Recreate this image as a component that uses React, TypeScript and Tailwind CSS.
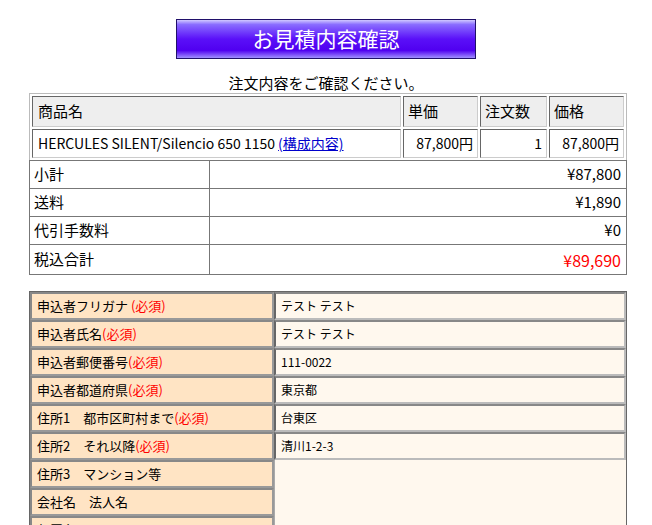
export default function App() {
  const f = { fontFamily: '"Noto Sans CJK JP", "Liberation Sans", sans-serif' };
  const req = <span className="text-[#ff0000]">(必須)</span>;
  const rows: [React.ReactNode, string][] = [
    [<>申込者フリガナ {req}</>, "テスト テスト"],
    [<>申込者氏名{req}</>, "テスト テスト"],
    [<>申込者郵便番号{req}</>, "111-0022"],
    [<>申込者都道府県{req}</>, "東京都"],
    [<>住所1　都市区町村まで{req}</>, "台東区"],
    [<>住所2　それ以降{req}</>, "清川1-2-3"],
  ];
  const cell = "border border-t-[#666] border-l-[#666] border-b-[#ccc] border-r-[#ccc]";
  const fcellL = "h-[28px] bg-[#ffe4c4] border-2 border-t-[#888] border-l-[#888] border-b-[#999] border-r-[#999] px-[5px] text-[13px]";
  const fcellR = "h-[28px] bg-[#fff8ee] border-2 border-t-[#888] border-l-[#666] border-b-[#bbb] border-r-[#bbb] px-[5px] text-[12px]";
  return (
    <div style={f} className="w-[652px] h-[525px] overflow-hidden bg-white text-black">
      <div className="flex justify-center pt-[19px]">
        <div className="w-[300px] h-[40px] border border-[#20106a] flex items-center justify-center text-white text-[21px] bg-[linear-gradient(to_bottom,#d0c8ff_0%,#8a6cff_12%,#5a10f8_50%,#5000f0_80%,#a090ff_100%)]">
          お見積内容確認
        </div>
      </div>
      <div className="text-center text-[15px] mt-[14px] leading-[20px]">注文内容をご確認ください。</div>
      <div className="mx-[29px] w-[598px]">
        <table className="w-full border border-[#bbb] border-separate border-spacing-[2px] text-[15px]">
          <tbody>
            <tr className="h-[31px] bg-[#eee]">
              <td className={`${cell} px-[5px]`}>商品名</td>
              <td className={`${cell} px-[4px] w-[75px]`}>単価</td>
              <td className={`${cell} px-[4px] w-[67px]`}>注文数</td>
              <td className={`${cell} px-[4px] w-[75px]`}>価格</td>
            </tr>
            <tr className="h-[29px] text-[14px]">
              <td className={`${cell} px-[5px]`}>HERCULES SILENT/Silencio 650 1150 <span className="text-[#0000cc] underline">(構成内容)</span></td>
              <td className={`${cell} px-[4px] text-right`}>87,800円</td>
              <td className={`${cell} px-[4px] text-right`}>1</td>
              <td className={`${cell} px-[4px] text-right`}>87,800円</td>
            </tr>
          </tbody>
        </table>
        <table className="w-full border-collapse text-[15px] mt-[-1px]">
          <tbody>
            {[["小計", "¥87,800"], ["送料", "¥1,890"], ["代引手数料", "¥0"], ["税込合計", "¥89,690"]].map(([a, b], i) => (
              <tr key={a} className={i === 3 ? "h-[30px]" : "h-[28px]"}>
                <td className="border border-[#777] w-[180px] px-[4px]">{a}</td>
                <td className={`border border-[#777] text-right px-[5px] ${i === 3 ? "text-[#ff0000] text-[16px]" : ""}`}>{b}</td>
              </tr>
            ))}
          </tbody>
        </table>
        <table className="w-full border border-[#666] border-separate border-spacing-0 mt-[16px]">
          <tbody>
            {rows.map(([a, b], i) => (
              <tr key={i}>
                <td className={`${fcellL} w-[244px]`}>{a}</td>
                <td className={fcellR}>{b}</td>
              </tr>
            ))}
            <tr>
              <td className={fcellL}>住所3　マンション等</td>
              <td rowSpan={3} className="bg-[#fff8ee] border-l border-l-[#aaa]"></td>
            </tr>
            <tr><td className={fcellL}>会社名　法人名</td></tr>
            <tr><td className={fcellL}>部署名</td></tr>
          </tbody>
        </table>
      </div>
    </div>
  );
}
